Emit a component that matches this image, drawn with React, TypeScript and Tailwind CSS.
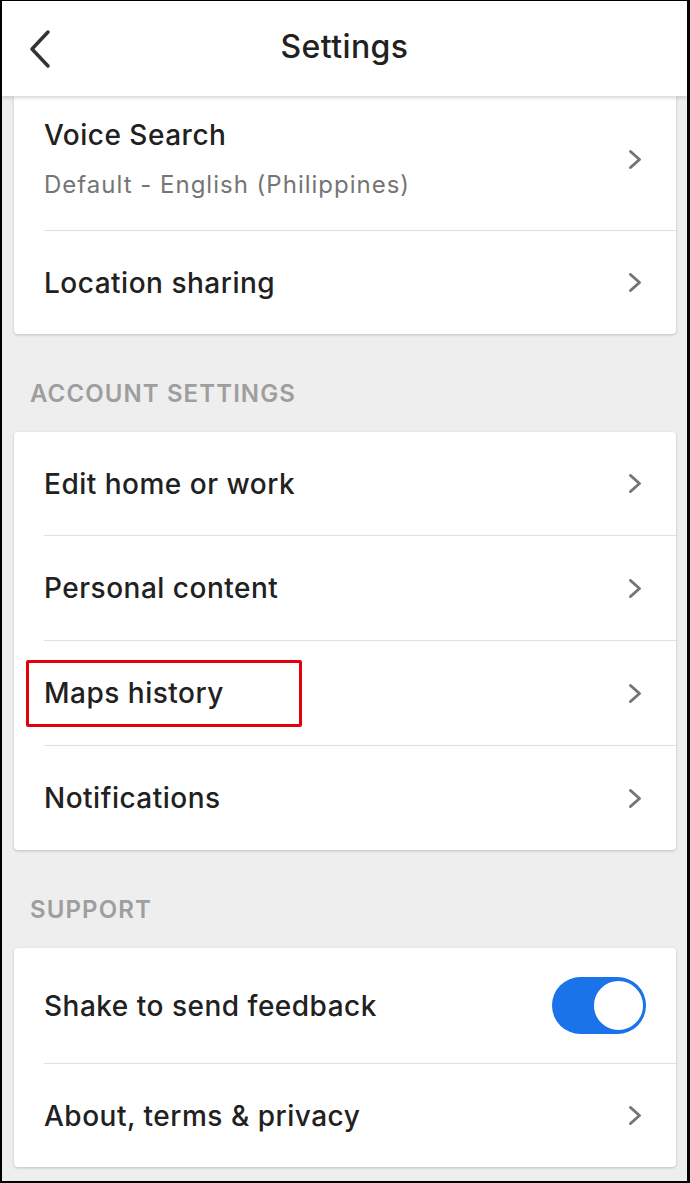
import React from 'react'

const font = { fontFamily: 'Inter, "Noto Sans", Roboto, sans-serif' }

function Chevron() {
  return (
    <svg width="14" height="21" viewBox="0 0 14 21" fill="none" className="shrink-0">
      <path d="M2.5 2.5 L11.5 10.5 L2.5 18.5" stroke="#757575" strokeWidth="3" strokeLinecap="round" strokeLinejoin="round" />
    </svg>
  )
}

function BackArrow() {
  return (
    <svg width="24" height="40" viewBox="0 0 24 40" fill="none">
      <path d="M20 3 L4 20 L20 37" stroke="#333333" strokeWidth="3.5" strokeLinecap="round" strokeLinejoin="round" />
    </svg>
  )
}

function Divider() {
  return <div className="ml-[30px] h-px bg-[#e0e0e0]" />
}

function Row({ label, height, highlight }: { label: string; height: string; highlight?: boolean }) {
  return (
    <div className={`relative flex items-center justify-between pl-[30px] pr-[34px] ${height}`}>
      <span className="text-[28px] leading-[34px] font-medium text-[#212121] tracking-[0.5px]">{label}</span>
      <Chevron />
      {highlight && (
        <div className="absolute left-[12px] top-[19px] w-[276px] h-[67px] border-[3px] border-[#e3000b] rounded-[2px]" />
      )}
    </div>
  )
}

function SectionLabel({ text }: { text: string }) {
  return (
    <div className="h-[98px] pt-[45px] pl-[16px]">
      <span className="text-[24px] leading-[30px] font-semibold text-[#9e9e9e] tracking-[1.1px]">{text}</span>
    </div>
  )
}

export default function App() {
  return (
    <div
      style={font}
      className="w-[690px] h-[1183px] overflow-hidden bg-[#eeeeee] border-black border-t border-l-2 border-r-[3px] border-b-2 flex flex-col"
    >
      <header className="relative z-10 h-[95px] shrink-0 bg-white shadow-[0_2px_4px_rgba(0,0,0,0.16)] grid grid-cols-[1fr_auto_1fr] items-center">
        <div className="pl-[26px] pt-[1px]">
          <BackArrow />
        </div>
        <h1 className="text-[32px] leading-[40px] font-medium text-[#212121] tracking-[0.4px] -mt-[4px]">Settings</h1>
        <div />
      </header>

      <main className="pl-[12px] pr-[11px]">
        {/* card continues from above the header */}
        <div className="bg-white rounded-b-[4px] shadow-[0_1px_3px_rgba(0,0,0,0.2)]">
          <div className="flex items-center justify-between pl-[30px] pr-[34px] pt-[22px] pb-[30px]">
            <div className="flex flex-col">
              <span className="text-[28px] leading-[34px] font-medium text-[#212121] tracking-[0.5px]">Voice Search</span>
              <span className="mt-[18px] text-[24px] leading-[30px] text-[#757575] tracking-[1px]">Default - English (Philippines)</span>
            </div>
            <Chevron />
          </div>
          <Divider />
          <Row label="Location sharing" height="h-[103px]" />
        </div>

        <SectionLabel text="ACCOUNT SETTINGS" />

        <div className="bg-white rounded-[4px] shadow-[0_1px_3px_rgba(0,0,0,0.2)]">
          <Row label="Edit home or work" height="h-[103px]" />
          <Divider />
          <Row label="Personal content" height="h-[104px]" />
          <Divider />
          <Row label="Maps history" height="h-[104px]" highlight />
          <Divider />
          <Row label="Notifications" height="h-[104px]" />
        </div>

        <SectionLabel text="SUPPORT" />

        <div className="bg-white rounded-[4px] shadow-[0_1px_3px_rgba(0,0,0,0.2)]">
          <div className="flex items-center justify-between pl-[30px] pr-[30px] h-[115px]">
            <span className="text-[28px] leading-[34px] font-medium text-[#212121] tracking-[0.5px]">Shake to send feedback</span>
            <div className="w-[94px] h-[57px] rounded-full bg-[#1a73e8] flex items-center justify-end pr-[1px]">
              <div className="w-[53px] h-[53px] rounded-full bg-white border-2 border-[#1a73e8]" />
            </div>
          </div>
          <Divider />
          <Row label="About, terms & privacy" height="h-[103px]" />
        </div>
      </main>
    </div>
  )
}
